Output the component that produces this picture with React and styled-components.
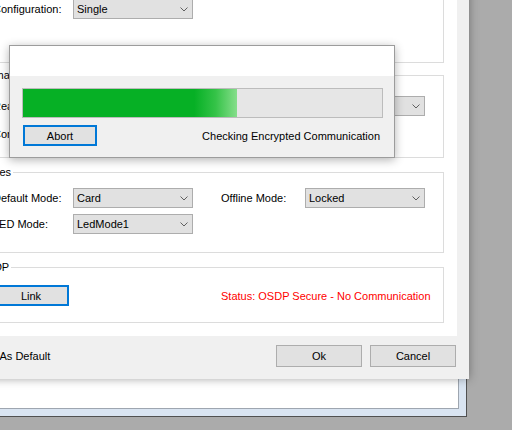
import React from 'react'
import styled, { createGlobalStyle } from 'styled-components'

const GlobalStyle = createGlobalStyle`
  html, body {
    margin: 0;
    padding: 0;
  }
  body {
    background: #ababab;
    font-family: "Liberation Sans", Arial, sans-serif;
    font-size: 11px;
    color: #000;
  }
`

const Desktop = styled.div`
  position: relative;
  width: 512px;
  height: 430px;
  overflow: hidden;
  background: #ababab;
`

// window behind the dialog, only its lower right corner shows
const ParentWindow = styled.div`
  position: absolute;
  left: -60px;
  top: -60px;
  width: 527px;
  height: 477px;
  box-sizing: border-box;
  border: 1px solid #505050;
  background: #d9e4f1;
  padding: 7px;
  display: flex;
`
const ParentClient = styled.div`
  flex: 1;
  background: #fff;
  border: 1px solid #9ea6b0;
`

const Dialog = styled.div`
  position: absolute;
  left: -60px;
  top: -40px;
  width: 529px;
  height: 419px;
  box-sizing: border-box;
  background: #f0f0f0;
  display: flex;
  flex-direction: column;
  box-shadow: 0 0 9px rgba(0, 0, 0, 0.35);
`
const Panel = styled.div`
  background: #fff;
  margin-right: 12px;
  padding: 10px 13px 13px 32px;
  display: flex;
  flex-direction: column;
`
const Group = styled.fieldset`
  margin: ${p => p.$gap}px 0 0 0;
  padding: 0;
  min-inline-size: 0;
  border: 1px solid #dcdcdc;
  height: ${p => p.$h}px;
  box-sizing: border-box;
`
const Legend = styled.legend`
  margin-left: 3px;
  padding: 0 2px;
  font-size: 11px;
  line-height: 14px;
`
const GroupBody = styled.div`
  display: flex;
  flex-direction: column;
  gap: ${p => p.$gap || 0}px;
  padding: ${p => p.$top}px 0 0 20px;
`
const Row = styled.div`
  display: flex;
  align-items: center;
  height: ${p => p.$h || 20}px;
`
const Label = styled.span`
  width: ${p => p.$w || 80}px;
  margin-left: ${p => p.$ml || 0}px;
  flex-shrink: 0;
  white-space: nowrap;
`
const ComboBox = styled.div`
  width: 120px;
  height: 20px;
  box-sizing: border-box;
  flex-shrink: 0;
  border: 1px solid #adadad;
  background: #e1e1e1;
  display: flex;
  align-items: center;
  justify-content: space-between;
  padding: 0 4px 0 3px;
`
const Button = styled.div`
  width: ${p => p.$w}px;
  height: ${p => p.$h || 22}px;
  box-sizing: border-box;
  flex-shrink: 0;
  margin-left: ${p => p.$ml || 0}px;
  background: #e1e1e1;
  border: ${p => (p.$focused ? '2px solid #0078d7' : '1px solid #adadad')};
  display: flex;
  align-items: center;
  justify-content: center;
`
const StatusText = styled.span`
  margin-left: ${p => p.$ml}px;
  color: ${p => p.$color || '#000'};
  white-space: nowrap;
`

const Footer = styled.div`
  display: flex;
  align-items: center;
  justify-content: space-between;
  padding: 9px 13px 12px 15px;
`
const CheckRow = styled.label`
  display: flex;
  align-items: center;
  gap: 4px;
  height: 22px;
  white-space: nowrap;
`
const CheckBox = styled.span`
  width: 13px;
  height: 13px;
  box-sizing: border-box;
  border: 1px solid #333;
  background: #fff;
`
const ButtonGroup = styled.div`
  display: flex;
  gap: 8px;
`

const ProgressWindow = styled.div`
  position: absolute;
  left: 9px;
  top: 45px;
  width: 386px;
  height: 113px;
  box-sizing: border-box;
  border: 1px solid #9c9c9c;
  background: #f0f0f0;
  box-shadow: 0 2px 9px rgba(0, 0, 0, 0.3);
  display: flex;
  flex-direction: column;
`
const ProgressHeader = styled.div`
  height: 30px;
  background: #fff;
`
const ProgressBody = styled.div`
  padding: 12px 11px 0 12px;
  display: flex;
  flex-direction: column;
  gap: 7px;
`
const Track = styled.div`
  height: 30px;
  box-sizing: border-box;
  border: 1px solid #bcbcbc;
  background: #e6e6e6;
  display: flex;
`
const Fill = styled.div`
  height: 100%;
  background: linear-gradient(90deg, #06b025 0%, #06b025 80%, #35c348 90%, #86de8b 100%);
`
const ActionRow = styled.div`
  display: flex;
  align-items: center;
  justify-content: space-between;
  padding: 0 3px 0 1px;
`

function Chevron() {
  return (
    <svg width="8" height="5" viewBox="0 0 8 5">
      <path d="M0.5 0.5 L4 4 L7.5 0.5" stroke="#606060" strokeWidth="1" fill="none" />
    </svg>
  )
}

function Combo({ value }) {
  return (
    <ComboBox>
      <span>{value}</span>
      <Chevron />
    </ComboBox>
  )
}

const progress = 0.596

export default function App() {
  return (
    <Desktop>
      <GlobalStyle />
      <ParentWindow>
        <ParentClient />
      </ParentWindow>

      <Dialog>
        <Panel>
          <Group $gap={0} $h={93}>
            <Legend>Reader</Legend>
            <GroupBody $top={15}>
              <Row>
                <Label>Configuration:</Label>
                <Combo value="Single" />
              </Row>
            </GroupBody>
          </Group>

          <Group $gap={5} $h={90}>
            <Legend>Format</Legend>
            <GroupBody $top={14} $gap={8}>
              <Row>
                <Label>Reader Type:</Label>
                <Combo value="Wiegand" />
                <Label $ml={28} $w={84}>Bits:</Label>
                <Combo value="26" />
              </Row>
              <Row>
                <Label>Connection:</Label>
                <Combo value="RS485" />
              </Row>
            </GroupBody>
          </Group>

          <Group $gap={7} $h={88}>
            <Legend>Modes</Legend>
            <GroupBody $top={9} $gap={6}>
              <Row>
                <Label>Default Mode:</Label>
                <Combo value="Card" />
                <Label $ml={28} $w={84}>Offline Mode:</Label>
                <Combo value="Locked" />
              </Row>
              <Row>
                <Label>LED Mode:</Label>
                <Combo value="LedMode1" />
              </Row>
            </GroupBody>
          </Group>

          <Group $gap={7} $h={63}>
            <Legend>OSDP</Legend>
            <GroupBody $top={11}>
              <Row $h={21}>
                <Button $w={76} $h={21} $focused>Link</Button>
                <StatusText $ml={152} $color="#f00">
                  Status: OSDP Secure - No Communication
                </StatusText>
              </Row>
            </GroupBody>
          </Group>
        </Panel>

        <Footer>
          <CheckRow>
            <CheckBox />
            Save As Default
          </CheckRow>
          <ButtonGroup>
            <Button $w={86}>Ok</Button>
            <Button $w={86}>Cancel</Button>
          </ButtonGroup>
        </Footer>
      </Dialog>

      <ProgressWindow>
        <ProgressHeader />
        <ProgressBody>
          <Track>
            <Fill style={{ width: `${progress * 100}%` }} />
          </Track>
          <ActionRow>
            <Button $w={74} $h={21} $focused>Abort</Button>
            <span>Checking Encrypted Communication</span>
          </ActionRow>
        </ProgressBody>
      </ProgressWindow>
    </Desktop>
  )
}
